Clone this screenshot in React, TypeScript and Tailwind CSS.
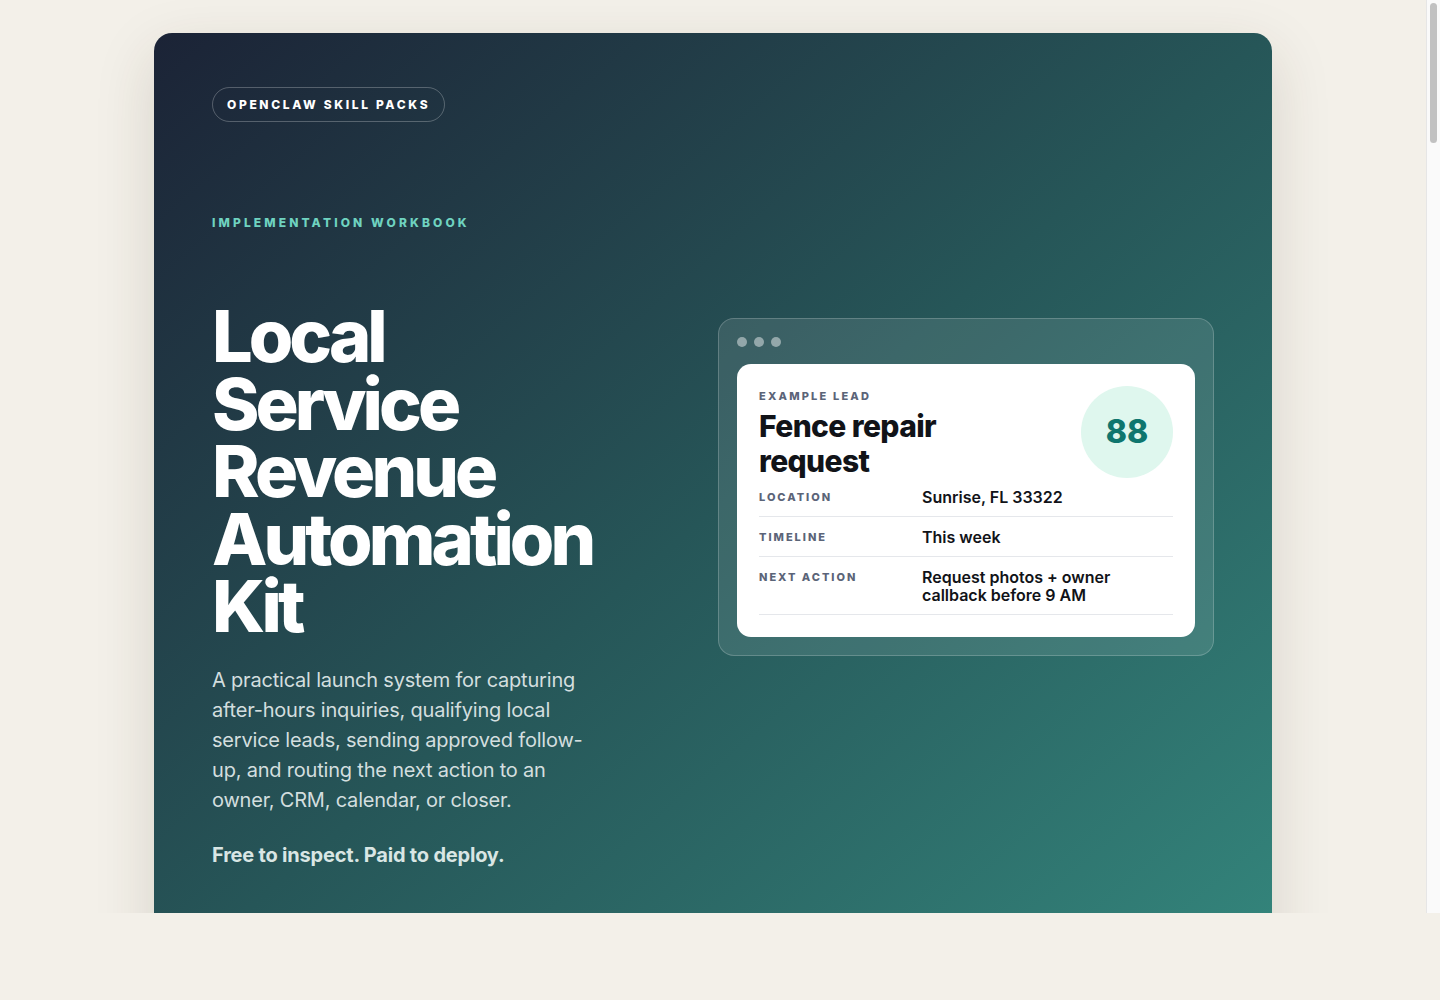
export default function App() {
  const rows = [
    { label: 'Location', value: 'Sunrise, FL 33322' },
    { label: 'Timeline', value: 'This week' },
    { label: 'Next action', value: 'Request photos + owner callback before 9 AM' },
  ];
  return (
    <div className="h-[1000px] bg-[#f3f0e9] font-[Inter,sans-serif]">
      <div className="flex h-[913px] overflow-hidden">
        <div className="w-[1426px] shrink-0 pt-[33px] pl-[154px]">
          <section className="w-[1118px] rounded-[18px] bg-gradient-to-br from-[#1b2336] via-[#265658] to-[#34877d] px-[58px] pt-[54px] pb-[120px] shadow-[0_20px_60px_rgba(60,50,30,0.15)]">
            <span className="inline-block rounded-full border border-white/25 px-[14px] py-[9px] text-[12px] font-extrabold uppercase tracking-[0.22em] text-white leading-[15px]">
              OpenClaw Skill Packs
            </span>
            <p className="mt-[92px] text-[12px] font-extrabold uppercase tracking-[0.26em] text-[#6fd3c0]">
              Implementation Workbook
            </p>
            <div className="mt-[70px] grid grid-cols-[1fr_496px] gap-[112px]">
              <div>
                <h1 className="text-[72px] font-extrabold leading-[67.5px] tracking-[-0.055em] text-white">
                  Local
                  <br />
                  Service
                  <br />
                  Revenue
                  <br />
                  Automation
                  <br />
                  Kit
                </h1>
                <p className="mt-[25px] text-[20px] leading-[30px] text-[#d3dedf] tracking-[-0.01em]">
                  A practical launch system for capturing after-hours inquiries, qualifying local service leads, sending approved follow-up, and routing the next action to an owner, CRM, calendar, or closer.
                </p>
                <p className="mt-[25px] text-[20px] font-bold leading-[30px] text-[#d9e6e4] tracking-[-0.01em]">
                  Free to inspect. Paid to deploy.
                </p>
              </div>
              <div className="self-start mt-[16px] rounded-[16px] border border-white/20 bg-white/10 p-[18px]">
                <div className="flex gap-[7px] pb-[17px]">
                  <span className="h-[10px] w-[10px] rounded-full bg-white/45" />
                  <span className="h-[10px] w-[10px] rounded-full bg-white/45" />
                  <span className="h-[10px] w-[10px] rounded-full bg-white/45" />
                </div>
                <div className="rounded-[14px] bg-white px-[22px] pt-[22px] pb-[22px]">
                  <div className="flex justify-between">
                    <div className="pt-[2px]">
                      <p className="text-[11px] font-extrabold uppercase tracking-[0.2em] text-[#5b6478]">Example Lead</p>
                      <h2 className="mt-[4px] text-[30px] font-extrabold leading-[35px] tracking-[-0.02em] text-[#111318]">
                        Fence repair
                        <br />
                        request
                      </h2>
                    </div>
                    <div className="flex h-[92px] w-[92px] items-center justify-center rounded-full bg-[#dff7ee] text-[32px] font-extrabold text-[#0f766e]">
                      88
                    </div>
                  </div>
                  <div className="-mt-[2px]">
                    {rows.map((r) => (
                      <div key={r.label} className="grid grid-cols-[163px_1fr] border-b border-[#e5e7eb] pt-[11px] pb-[10px]">
                        <span className="pt-[1px] text-[11px] font-extrabold uppercase tracking-[0.18em] text-[#5b6478]">{r.label}</span>
                        <span className="text-[16px] font-semibold leading-[18px] text-[#111318]">{r.value}</span>
                      </div>
                    ))}
                  </div>
                </div>
              </div>
            </div>
          </section>
        </div>
        <div className="w-[14px] shrink-0 border-l border-[#e6e6e6] bg-[#fafafa] p-[3px]">
          <div className="h-[140px] rounded-full bg-[#c1c1c1]" />
        </div>
      </div>
    </div>
  );
}
